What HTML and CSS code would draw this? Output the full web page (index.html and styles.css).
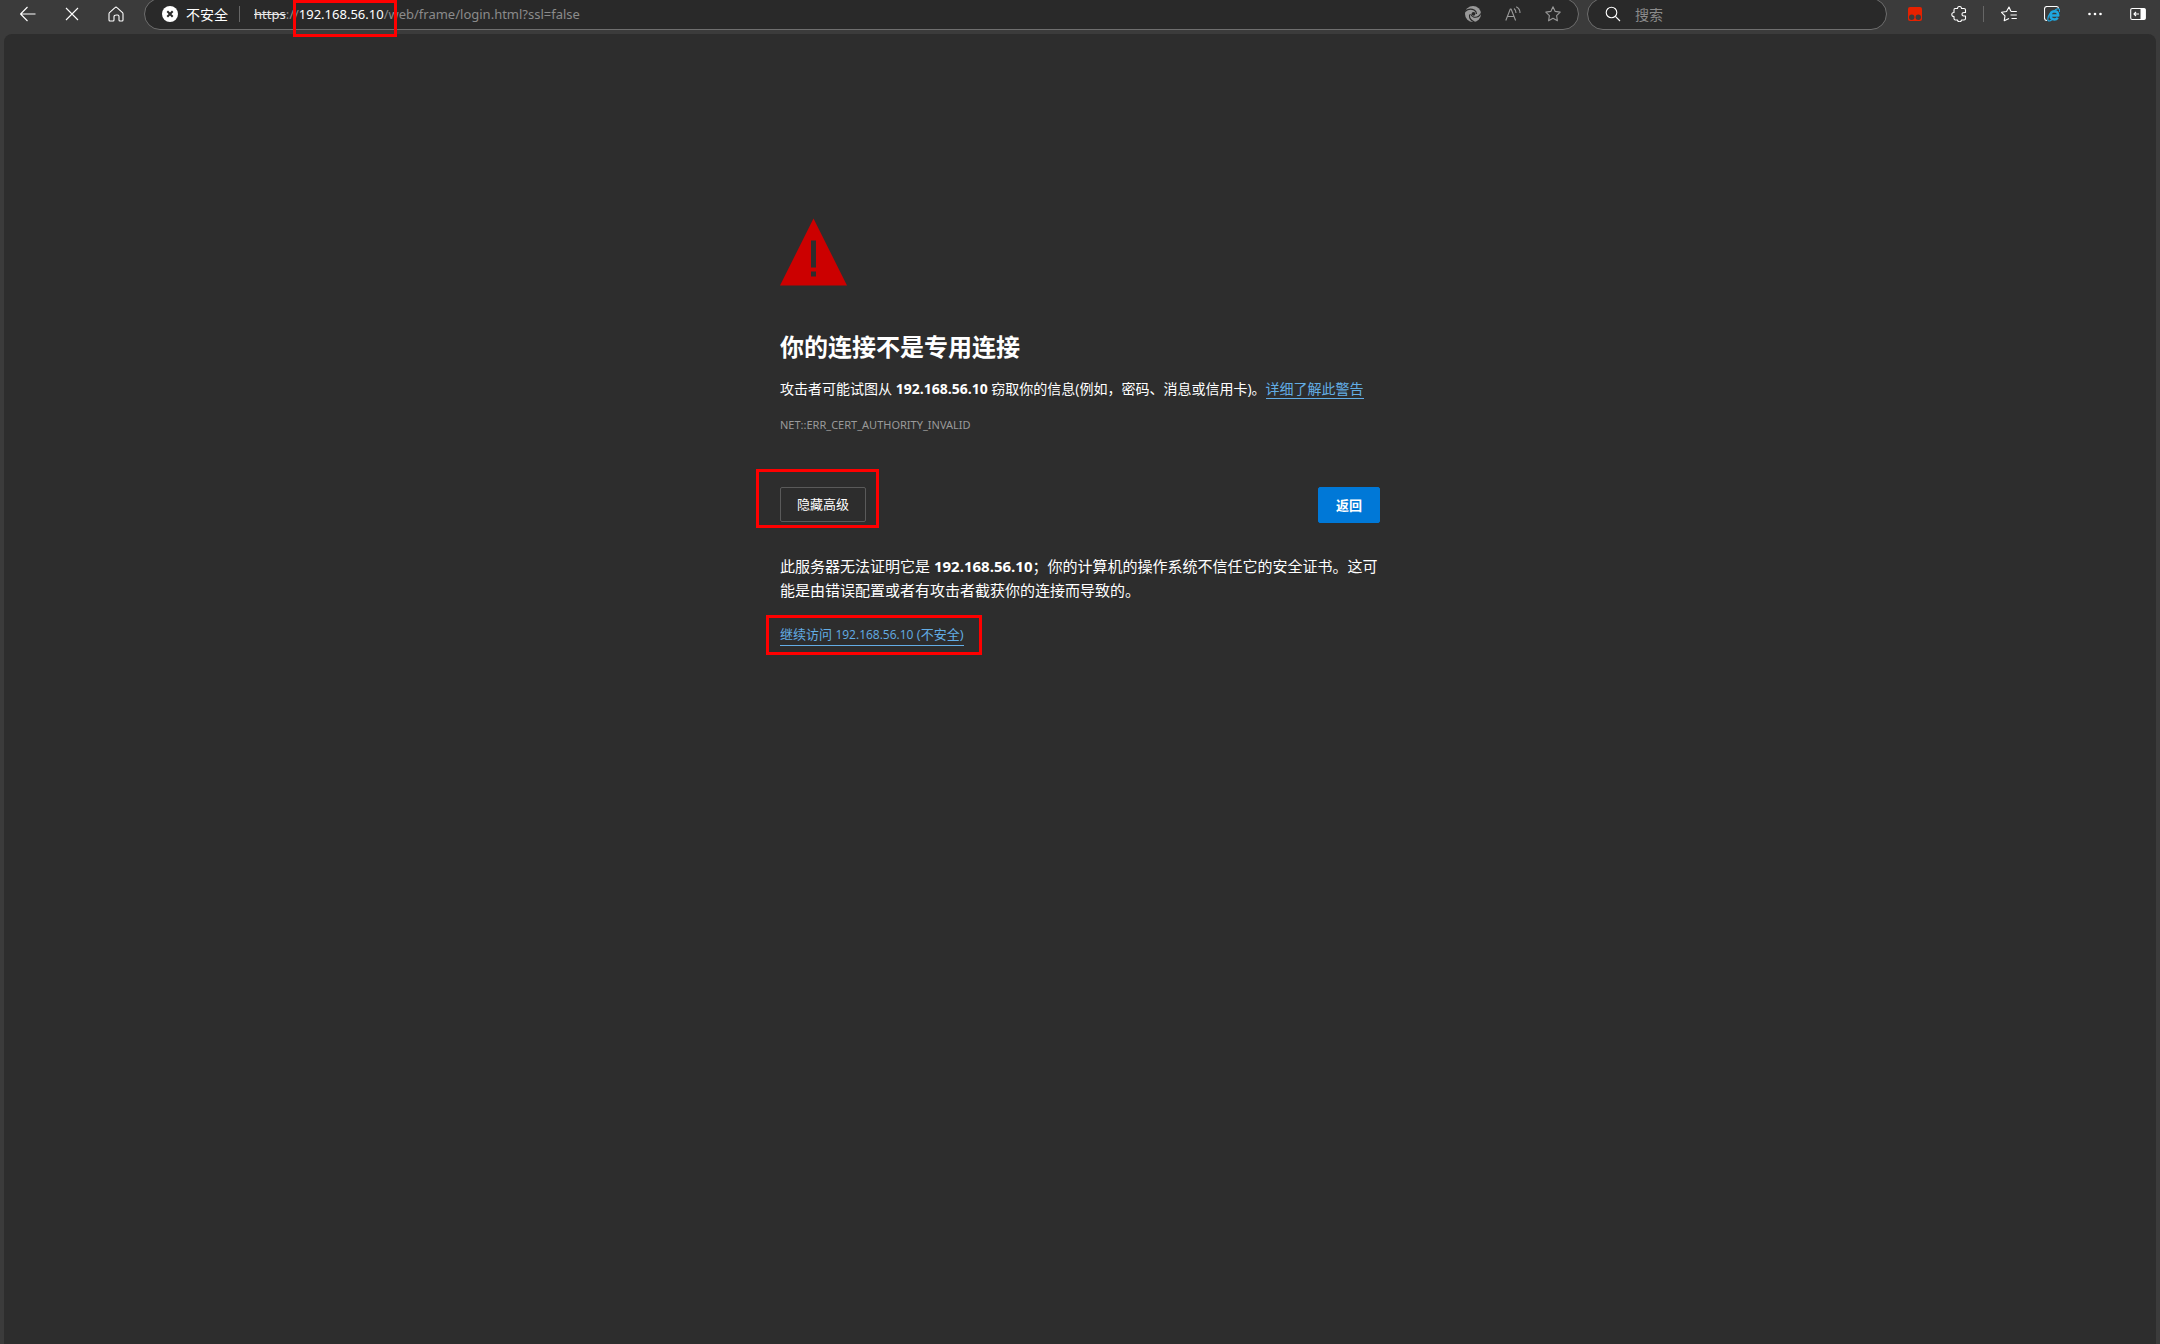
FILE: index.html
```
<!DOCTYPE html>
<html lang="zh-CN">
<head>
    <meta charset="UTF-8">
    <meta name="viewport" content="width=device-width, initial-scale=1.0">
    <title>隐私错误</title>
    <link rel="stylesheet" href="styles.css">
</head>
<body>
    <header class="toolbar">
        <nav class="nav-buttons">
            <button class="icon-btn" aria-label="后退">
                <svg viewBox="0 0 16 16"><path d="M15.5 8H.8M7.5 1 .6 8l6.9 7"/></svg>
            </button>
            <button class="icon-btn" aria-label="停止">
                <svg viewBox="0 0 16 16"><path d="M2 2l12 12M14 2 2 14"/></svg>
            </button>
            <button class="icon-btn" aria-label="主页">
                <svg viewBox="0 0 16 16"><path d="M1.5 6.7 7 1.6q1-1 2 0l5.500 5.100q.5.500.5 1.200V14q0 1-1 1h-2q-1 0-1-1v-3.500q0-1.500-1.500-1.500h-1Q6 9 6 10.500V14q0 1-1 1H2q-1 0-1-1V7.900q0-.7.5-1.200z"/></svg>
            </button>
        </nav>

        <div class="address-bar">
            <button class="security">
                <svg viewBox="0 0 16 16"><circle class="solid" cx="8" cy="8" r="8"/><path class="cross" d="M5.300 5.300l5.400 5.400M10.700 5.300l-5.400 5.400"/></svg>
                不安全
            </button>
            <span class="separator"></span>
            <div class="url"><s>https</s>://<span class="host">192.168.56.10<i class="mark mark-host"></i></span>/web/frame/login.html?ssl=false</div>
            <div class="address-actions">
                <button class="icon-btn dim" aria-label="购物">
                    <svg viewBox="0 0 16 16"><circle class="solid" cx="8" cy="8" r="8"/><path class="swirl" d="M0 5.500q4.500-4 9.500-1.200 2 1.500 2 3.700M15.800 7.500q-2 4.500-6.800 3.700-2.800-.7-3.300-3.200M9.500 16Q3.500 13.500 4.700 8.500"/><circle class="eye" cx="8.500" cy="7.800" r="1.900"/></svg>
                </button>
                <button class="icon-btn dim" aria-label="大声朗读">
                    <svg viewBox="0 0 16 16"><path d="M.8 14.500 5.300 3h.8l4.500 11.500M2.300 10.500h6.800M9 2.500q2 1.500 2 4.500M11.200.8q4 2.200 3.800 6.200"/></svg>
                </button>
                <button class="icon-btn dim" aria-label="收藏">
                    <svg viewBox="0 0 16 16"><path d="M8 .8l2.200 4.600 5 .7-3.600 3.500.8 5.200L8 12.300l-4.400 2.500.8-5.200L.8 6.100l5-.7z"/></svg>
                </button>
            </div>
        </div>

        <div class="search">
            <svg viewBox="0 0 16 16"><circle cx="6.500" cy="6.500" r="5.300"/><path d="M10.400 10.400 15 15"/></svg>
            <input type="text" placeholder="搜索" aria-label="搜索">
        </div>

        <div class="extensions">
            <button class="icon-btn" aria-label="篡改猴">
                <svg viewBox="0 0 16 16"><rect class="red" x="1" y="1" width="14" height="14" rx="2"/><circle class="hole" cx="4.700" cy="11.200" r="2.700"/><circle class="hole" cx="11.300" cy="11.200" r="2.700"/></svg>
            </button>
            <button class="icon-btn" aria-label="扩展">
                <svg viewBox="0 0 16 16"><path d="M4 2.500h2.500q0-2 2-2t2 2H13q1.500 0 1.500 1.500v2.500q-3.500-.3-3.500 1.700t3.500 1.800v2.500q0 1.500-1.500 1.500h-2.500q0 1.700-2 1.700t-2-1.700H4.500q-1.500 0-1.500-1.500V10.500q-2.200 0-2.200-2T3 6.500V4q0-1.500 1-1.500z"/></svg>
            </button>
        </div>
        <span class="separator"></span>
        <div class="tools">
            <button class="icon-btn" aria-label="收藏夹">
                <svg viewBox="0 0 16 16"><path d="M10 5.500 8 1 5.500 5.500l-5 .8L4 9.800l-.8 5L8 12.500M10 5.500h5.800M9.500 9h6.300M10.500 12.500h5.300"/></svg>
            </button>
            <button class="icon-btn" aria-label="IE 模式">
                <svg viewBox="0 0 16 16"><path d="M3 14.500q-2.500 0-2.500-2.500V3Q.5.500 3 .500h9q2.500 0 2.500 2"/><path class="ie" d="M6.500 9.500h7.800Q14 5.200 10.300 5.200 6.500 5.500 6.500 9.500t4 4q2 0 3.300-1.700"/><path class="ie-ring" d="M7.500 6Q3 10.500 4 14.500q1.500 1.300 4.200-1M11 4q3.500-2 4.500-.7.500 1-.3 2.700"/></svg>
            </button>
            <button class="icon-btn" aria-label="设置及其他">
                <svg viewBox="0 0 16 16"><circle class="solid" cx="2.500" cy="8" r="1.300"/><circle class="solid" cx="8" cy="8" r="1.300"/><circle class="solid" cx="13.500" cy="8" r="1.300"/></svg>
            </button>
            <button class="icon-btn" aria-label="边栏">
                <svg viewBox="0 0 16 16"><rect x=".7" y="2.500" width="14.600" height="11" rx="1.500"/><path class="solid" d="M10.500 2.500h4q1 0 1 1v9q0 1-1 1h-4z"/><path d="M9 8H4M6 6 4 8l2 2"/></svg>
            </button>
        </div>
    </header>

    <main class="page">
        <div class="interstitial">
            <svg class="warning" viewBox="0 0 67 67"><path class="triangle" d="M33.500 0 67 67H0z"/><path class="bang" d="M31 22h5v27h-5zM31 53h5v5h-5z"/></svg>
            <h1>你的连接不是专用连接</h1>
            <p class="summary">攻击者可能试图从 <strong>192.168.56.10</strong> 窃取你的信息(例如，密码、消息或信用卡)。<a href="#">详细了解此警告</a></p>
            <div class="error-code">NET::ERR_CERT_AUTHORITY_INVALID</div>

            <div class="actions">
                <div class="marked">
                    <button class="btn">隐藏高级</button>
                    <i class="mark mark-advanced"></i>
                </div>
                <button class="btn primary">返回</button>
            </div>

            <p class="details">此服务器无法证明它是 <strong>192.168.56.10</strong>；你的计算机的操作系统不信任它的安全证书。这可能是由错误配置或者有攻击者截获你的连接而导致的。</p>
            <div class="marked proceed">
                <a href="#">继续访问 <span class="ip">192.168.56.10</span> (不安全)</a>
                <i class="mark mark-proceed"></i>
            </div>
        </div>
    </main>
</body>
</html>
```
FILE: styles.css
```
* {
    box-sizing: border-box;
}

body {
    display: flex;
    flex-direction: column;
    min-height: 100vh;
    margin: 0;
    background-color: #3b3b3b;
    color: #fff;
    font-family: "Open Sans", "Noto Sans CJK SC", sans-serif;
    font-size: 14px;
    overflow: hidden;
}

button {
    padding: 0;
    border: none;
    background: none;
    color: inherit;
    font: inherit;
    cursor: pointer;
}

svg {
    flex: none;
    width: 16px;
    height: 16px;
    fill: none;
    stroke: currentColor;
    stroke-width: 1.1;
    stroke-linejoin: round;
}

/* Toolbar */
.toolbar {
    display: flex;
    align-items: center;
    height: 32px;
    margin-top: -2px;
    margin-bottom: 4px;
    padding-right: 14px;
}

.nav-buttons {
    display: flex;
    gap: 28px;
    padding: 0 20px;
}

.icon-btn {
    display: flex;
    width: 16px;
    height: 16px;
}

.address-bar,
.search {
    display: flex;
    align-items: center;
    height: 32px;
    border: 1px solid #6e6e6e;
    border-radius: 16px;
    background-color: #292929;
}

.address-bar {
    flex: 1;
    padding: 0 17px;
    font-family: "Noto Sans", "Noto Sans CJK SC", sans-serif;
    font-size: 13px;
}

.security {
    display: flex;
    align-items: center;
    gap: 8px;
    font-size: 14px;
}

.separator {
    width: 1px;
    height: 16px;
    background-color: #666;
}

.address-bar .separator {
    margin: 0 14px 0 11px;
}

.url {
    flex: 1;
    color: #8b8b8b;
    white-space: nowrap;
}

.url s {
    color: #e8e8e8;
}

.host {
    position: relative;
    color: #fff;
}

.address-actions {
    display: flex;
    gap: 24px;
}

.dim {
    color: #999;
}

.search {
    width: 300px;
    margin-left: 8px;
    padding: 0 17px;
    gap: 14px;
}

.search input {
    flex: 1;
    min-width: 0;
    padding: 0;
    border: none;
    outline: none;
    background: none;
    color: #fff;
    font: inherit;
}

.search input::placeholder {
    color: #8b8b8b;
}

.extensions {
    display: flex;
    gap: 28px;
    padding: 0 16px 0 20px;
}

.tools {
    display: flex;
    gap: 27px;
    padding-left: 17px;
}

.solid {
    fill: currentColor;
    stroke: none;
}

.cross {
    stroke: #292929;
    stroke-width: 2;
}

.swirl {
    stroke: #292929;
    stroke-width: 1.1;
}

.eye {
    fill: #292929;
    stroke: none;
}

.red {
    fill: #e62100;
    stroke: none;
}

.hole {
    fill: #3b3b3b;
    stroke: none;
}

.ie {
    stroke: #1ea7e0;
    stroke-width: 2.4;
}

.ie-ring {
    stroke: #1ea7e0;
}

/* Red frames */
.marked {
    position: relative;
}

.mark {
    position: absolute;
    border: 3px solid #f00;
    pointer-events: none;
}

.mark-host {
    inset: -5px -13px -14px -6px;
}

.mark-advanced {
    inset: -18px -13px -6px -24px;
}

.mark-proceed {
    inset: -9px -18px -9px -14px;
}

/* Page */
.page {
    flex: 1;
    margin: 0 4px;
    border-radius: 8px 8px 0 0;
    background-color: #2d2d2d;
}

.interstitial {
    width: 600px;
    max-width: 100%;
    margin: 0 auto;
    padding-top: 184px;
}

.warning {
    display: block;
    width: 67px;
    height: 68px;
}

.triangle {
    fill: #c00;
    stroke: none;
}

.bang {
    fill: #2d2d2d;
    stroke: none;
}

h1 {
    margin: 45px 0 14px;
    font-size: 24px;
    line-height: 32px;
}

p {
    margin: 0;
}

a {
    border-bottom: 1px solid #63ade5;
    color: #63ade5;
    text-decoration: none;
}

.summary {
    line-height: 24px;
}

.error-code {
    margin-top: 16px;
    color: #9a9a9a;
    font-family: "Noto Sans", sans-serif;
    font-size: 11px;
    line-height: 16px;
}

.actions {
    display: flex;
    justify-content: space-between;
    align-items: flex-start;
    margin-top: 54px;
}

.btn {
    display: block;
    height: 35px;
    padding: 0 16px 2px;
    border: 1px solid #5a5a5a;
    border-radius: 2px;
    font-size: 13px;
}

.primary {
    height: 36px;
    padding: 0 17px 2px;
    border-color: #0078d7;
    background-color: #0078d7;
    font-weight: bold;
}

.details {
    margin-top: 31px;
    font-size: 15px;
    line-height: 24px;
}

.proceed {
    width: fit-content;
    margin-top: 22px;
    font-size: 13px;
    line-height: 20px;
}

.proceed a {
    display: block;
}

.ip {
    font-size: 12px;
}
```
